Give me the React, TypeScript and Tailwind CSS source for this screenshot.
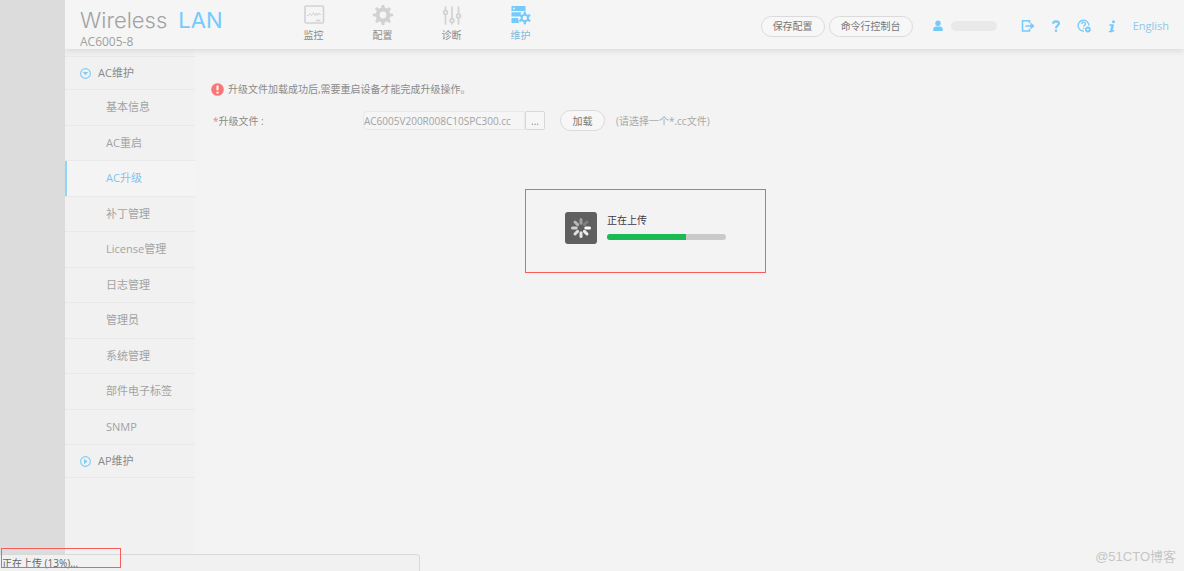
import type { ReactNode } from "react";
import clsx from "clsx";

const menuItems = [
  "基本信息",
  "AC重启",
  "AC升级",
  "补丁管理",
  "License管理",
  "日志管理",
  "管理员",
  "系统管理",
  "部件电子标签",
  "SNMP",
];

const GEAR_TEETH = [0, 45, 90, 135, 180, 225, 270, 315];

function MonitorIcon() {
  return (
    <svg width="22" height="20" viewBox="0 0 22 20" fill="none" stroke="currentColor">
      <rect x="2" y="1" width="18.500" height="17" rx="1" strokeWidth="1.600" />
      <path d="M4 10.500h1.500l1.500-2 1.500 2 2-3 1.500 3 1.500-2.500 1 2.500 1.500-2.500 1 1.500h1" strokeWidth="1" />
      <path d="M13 15.500h4.500" strokeWidth="1.500" />
    </svg>
  );
}

function GearIcon() {
  return (
    <svg width="22" height="22" viewBox="0 0 22 22" fill="none" stroke="currentColor">
      <circle cx="11" cy="11" r="5.400" strokeWidth="4" />
      {GEAR_TEETH.map((a) => (
        <path key={a} d="M11 4V2.300" strokeWidth="3.200" strokeLinecap="round" transform={`rotate(${a} 11 11)`} />
      ))}
    </svg>
  );
}

function SlidersIcon() {
  return (
    <svg width="20" height="20" viewBox="0 0 20 20" fill="none" stroke="currentColor" strokeWidth="1.700" strokeLinecap="round">
      <path d="M3.500 2v3.500M3.500 9.500V19M10 2v11.500M10 17.500V19M16.500 2v7M16.500 13v6" />
      <circle cx="3.500" cy="7.500" r="1.900" />
      <circle cx="10" cy="15.500" r="1.900" />
      <circle cx="16.500" cy="11" r="1.900" />
    </svg>
  );
}

function MaintainIcon() {
  return (
    <svg width="20" height="20" viewBox="0 0 20 20" fill="none">
      <path d="M.5 1h14v5H.5zM.5 7.300h10l-2.500 4.200H.5zM.5 13H7l1 5H.5z" fill="currentColor" />
      <circle cx="3" cy="3.500" r="1" fill="#f5f5f5" />
      <g stroke="currentColor">
        <circle cx="13.800" cy="13" r="3.200" strokeWidth="2" />
        {[0, 60, 120, 180, 240, 300].map((a) => (
          <path key={a} d="M13.800 9V7.800" strokeWidth="2.400" strokeLinecap="round" transform={`rotate(${a} 13.800 13)`} />
        ))}
      </g>
    </svg>
  );
}

function LogoutIcon() {
  return (
    <svg width="14" height="14" viewBox="0 0 14 14" fill="none" stroke="currentColor" strokeWidth="1.500">
      <path d="M8.500 4V1.700H1.500v10.200h7V9.800" />
      <path d="M4.500 7h6" />
      <path d="M9.500 3.500 13.600 7l-4.100 3.500z" fill="currentColor" stroke="none" />
    </svg>
  );
}

function QuestionIcon() {
  return (
    <svg width="8" height="12" viewBox="0 0 8 12" fill="none" stroke="currentColor" strokeWidth="2.200">
      <path d="M1.100 3.800C1.100 2 2.300 1.300 4 1.300s2.900.9 2.900 2.300C6.900 5.500 4 5.600 4 8.200" />
      <path d="M4 9.600v2.200" />
    </svg>
  );
}

function SupportIcon() {
  return (
    <svg width="14" height="14" viewBox="0 0 14 14" fill="none" stroke="currentColor" strokeWidth="1.300">
      <path d="M11.900 6.500A5.400 5.400 0 1 0 7 12" />
      <path d="M4.700 5c0-1.200.8-1.800 1.900-1.800s1.900.7 1.900 1.700c0 1.300-1.900 1.300-1.900 2.700M6.600 8.700v1.200" />
      <circle cx="10.800" cy="10.500" r="2" strokeWidth="1.800" />
    </svg>
  );
}

function InfoIcon() {
  return (
    <svg width="8" height="13" viewBox="0 0 8 13" fill="none" stroke="currentColor">
      <circle cx="5.500" cy="1.700" r="1.500" fill="currentColor" stroke="none" />
      <path d="M4.800 5 3.200 11" strokeWidth="2.500" />
      <path d="M1.300 5h4.200M.8 11.600h2.800L6.300 10.400" strokeWidth="1.400" />
    </svg>
  );
}

function UserIcon() {
  return (
    <svg width="10" height="12" viewBox="0 0 10 12" fill="currentColor">
      <circle cx="5" cy="3.200" r="2.700" />
      <path d="M.3 11V9.200C.3 7.500 1.700 6.600 3 6.600h4c1.300 0 2.700.9 2.700 2.600V11z" />
    </svg>
  );
}

function CaretIcon({ open }: { open?: boolean }) {
  return (
    <svg width="11" height="11" viewBox="0 0 11 11" fill="none" className="text-[#7ccdf8]">
      <circle cx="5.500" cy="5.500" r="4.900" stroke="currentColor" strokeWidth="1.100" />
      <path d={open ? "M2.800 4h5.400L5.500 7.300z" : "M4 2.800v5.400l3.500-2.700z"} fill="currentColor" />
    </svg>
  );
}

function Spinner() {
  const shades = [0.4, 0.2, 1, 0.9, 0.85, 0.8, 0.7, 0.55];
  return (
    <svg width="32" height="32" viewBox="0 0 32 32" className="shrink-0">
      <rect width="32" height="32" rx="3" fill="#5f5f5f" />
      {shades.map((o, i) => (
        <path
          key={i}
          d="M16 11.200V7.500"
          stroke="#fff"
          strokeOpacity={o}
          strokeWidth="3"
          strokeLinecap="round"
          transform={`rotate(${i * 45} 16 16)`}
        />
      ))}
    </svg>
  );
}

function NavLink({ label, active, children }: { label: string; active?: boolean; children: ReactNode }) {
  return (
    <a href="#" className={clsx("flex w-[69px] flex-col items-center", active ? "text-[#74cafa]" : "text-[#d2d2d2]")}>
      <span className="flex h-6 items-center">{children}</span>
      <span className={clsx("text-[10px] leading-4", active ? "text-[#85b9dc]" : "text-[#8c8c8c]")}>{label}</span>
    </a>
  );
}

function PillButton({ children }: { children: ReactNode }) {
  return (
    <button className="h-[21px] rounded-full border border-[#dadada] bg-[#f7f7f7] px-[11px] text-[10px] leading-4 text-[#777]">
      {children}
    </button>
  );
}

function Header() {
  return (
    <header className="relative z-10 flex h-[49px] bg-[#f5f5f5] pr-[15px] shadow-[0_2px_6px_rgba(0,0,0,0.10)]">
      <div className="w-[214px] pl-[15px] pt-2">
        <h1 className="flex gap-[11px] font-[Inter,sans-serif] text-[22px] font-light leading-6 text-[#a2a2a2]">
          Wireless <span className="font-normal text-[#74cafa]">LAN</span>
        </h1>
        <p className="text-[12px] leading-5 text-[#a0a0a0]">AC6005-8</p>
      </div>
      <nav className="flex pt-[3px]">
        <NavLink label="监控"><MonitorIcon /></NavLink>
        <NavLink label="配置"><GearIcon /></NavLink>
        <NavLink label="诊断"><SlidersIcon /></NavLink>
        <NavLink label="维护" active><MaintainIcon /></NavLink>
      </nav>
      <div className="ml-auto flex items-center pt-[3px] text-[#74cafa]">
        <div className="flex gap-1">
          <PillButton>保存配置</PillButton>
          <PillButton>命令行控制台</PillButton>
        </div>
        <div className="ml-5 flex items-center gap-2">
          <UserIcon />
          <span className="h-[10px] w-[46px] rounded-md bg-[#e9e9e9]" />
        </div>
        <div className="ml-6 flex items-center gap-[17px]">
          <a href="#" aria-label="注销"><LogoutIcon /></a>
          <a href="#" aria-label="帮助"><QuestionIcon /></a>
          <a href="#" aria-label="支持"><SupportIcon /></a>
          <a href="#" aria-label="关于"><InfoIcon /></a>
          <a href="#" className="text-[11px] leading-4 text-[#8fc8ec]">English</a>
        </div>
      </div>
    </header>
  );
}

function Sidebar() {
  return (
    <aside className="w-[130px] bg-[#f1f1f1] pt-[7px] text-[11px] leading-4">
      <button className="flex h-[34px] w-full items-center gap-[7px] border-y border-[#e9e9e9] pl-[15px] text-[#8a8a8a]">
        <CaretIcon open />
        AC维护
      </button>
      <ul className="flex h-[355px] flex-col text-[#a3a3a3]">
        {menuItems.map((item) => (
          <li key={item} className="flex flex-1 border-b border-[#e9e9e9]">
            <a
              href="#"
              className={clsx(
                "flex flex-1 items-center border-l-2 pl-[39px]",
                item === "AC升级" ? "border-[#8fd5fa] bg-[#f4f4f4] text-[#80c4ee]" : "border-transparent",
              )}
            >
              {item}
            </a>
          </li>
        ))}
      </ul>
      <button className="flex h-[33px] w-full items-center gap-[7px] border-b border-[#e9e9e9] pl-[15px] text-[#8a8a8a]">
        <CaretIcon />
        AP维护
      </button>
    </aside>
  );
}

function UpgradePage() {
  return (
    <main className="flex-1 pl-4 pt-8 text-[10px] leading-4 text-[#8a8a8a]">
      <p className="flex items-center gap-1">
        <svg width="13" height="13" viewBox="0 0 13 13">
          <circle cx="6.500" cy="6.500" r="6.300" fill="#fa7676" />
          <path d="M6.500 2.500v4.800M6.500 8.700v1.800" stroke="#fff" strokeWidth="2" />
        </svg>
        升级文件加载成功后,需要重启设备才能完成升级操作。
      </p>
      <form className="mt-[13px] flex items-center">
        <label htmlFor="file" className="w-[152px] pl-[2px]">
          <span className="text-[#f08080]">*</span>升级文件 :
        </label>
        <input
          id="file"
          readOnly
          defaultValue="AC6005V200R008C10SPC300.cc"
          className="h-[19px] w-[162px] rounded-l-sm border border-[#e8e8e8] bg-[#f5f5f5] text-[#a3a3a3]"
        />
        <button type="button" className="h-[19px] w-5 rounded-xs border border-[#d8d8d8] bg-[#f6f6f6]">
          ...
        </button>
        <button type="button" className="ml-[15px] h-[21px] w-[45px] rounded-full border border-[#dadada] bg-[#f7f7f7] text-[#777]">
          加载
        </button>
        <span className="ml-[11px] text-[#a8a8a8]">(请选择一个*.cc文件)</span>
      </form>
      <section className="ml-[314px] mt-[58px] flex w-[241px] justify-center gap-[10px] border border-[#fa5c5c] pb-[28px] pt-[22px]">
        <Spinner />
        <div className="w-[119px]">
          <p className="text-[#3f3844]">正在上传</p>
          <div className="mt-[6px] h-[6px] overflow-hidden rounded-full bg-[#cacaca]">
            <div className="h-full w-2/3 bg-[#1cba54]" />
          </div>
        </div>
      </section>
    </main>
  );
}

export default function App() {
  return (
    <div className="relative flex min-h-screen overflow-hidden bg-[#f3f3f3] font-['Open_Sans','Noto_Sans_CJK_SC',sans-serif]">
      <div className="w-[65px] bg-[#dcdcdc]" />
      <div className="flex flex-1 flex-col overflow-hidden">
        <Header />
        <div className="flex flex-1">
          <Sidebar />
          <UpgradePage />
        </div>
      </div>

      {/* Browser status bar */}
      <div className="absolute bottom-0 left-0 h-[17px] w-[420px] rounded-tr border-r border-t border-[#d9d9d9] bg-[#f1f1f1] pl-[2px] text-[10px] leading-4 text-[#666]">
        正在上传 (13%)...
      </div>
      <div className="absolute bottom-[3px] left-px h-5 w-[120px] border border-[#fa5c5c]" />

      <span className="absolute bottom-1 right-2 font-['Liberation_Sans','Noto_Sans_CJK_SC',sans-serif] text-[13px] leading-5 text-[#c6c6c6]">
        @51CTO博客
      </span>
    </div>
  );
}
